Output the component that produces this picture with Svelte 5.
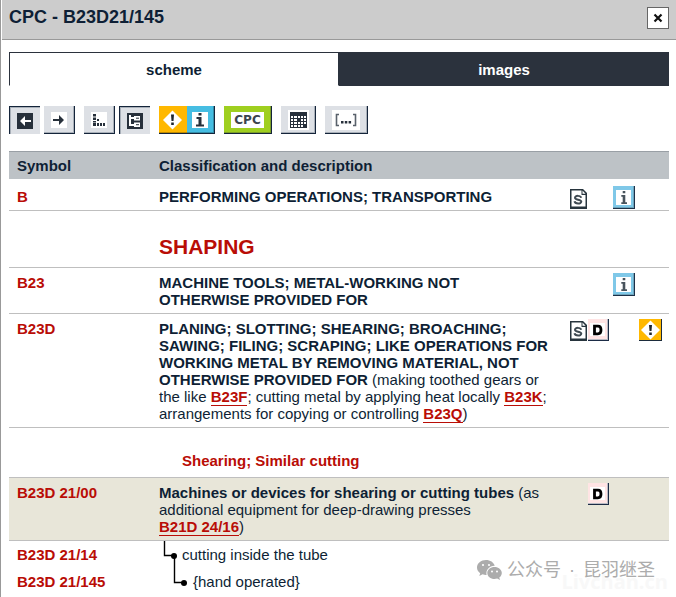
<script>
  const rows = [
    { symbol: 'B', kind: 'first', bold: 'PERFORMING OPERATIONS; TRANSPORTING', icons: ['s', 'i'] },
    { kind: 'section', heading: 'SHAPING' },
    { symbol: 'B23', bold: 'MACHINE TOOLS; METAL-WORKING NOT OTHERWISE PROVIDED FOR', icons: ['i'] },
    {
      symbol: 'B23D',
      bold: 'PLANING; SLOTTING; SHEARING; BROACHING; SAWING; FILING; SCRAPING; LIKE OPERATIONS FOR WORKING METAL BY REMOVING MATERIAL, NOT OTHERWISE PROVIDED FOR',
      parts: [
        { text: ' (making toothed gears or the like ' }, { link: 'B23F' },
        { text: '; cutting metal by applying heat locally ' }, { link: 'B23K' },
        { text: '; arrangements for copying or controlling ' }, { link: 'B23Q' }, { text: ')' }
      ],
      icons: ['s', 'd', 'w']
    },
    { kind: 'subsection', heading: 'Shearing; Similar cutting' },
    {
      symbol: 'B23D 21/00', kind: 'current',
      bold: 'Machines or devices for shearing or cutting tubes',
      parts: [
        { text: ' (as additional equipment for deep-drawing presses ' }, { link: 'B21D 24/16' }, { text: ')' }
      ],
      icons: ['d']
    },
    { symbol: 'B23D 21/14', kind: 'leaf', level: 1, label: 'cutting inside the tube' },
    { symbol: 'B23D 21/145', kind: 'leaf', level: 2, label: '{hand operated}' }
  ];
  const iconNames = { s: 'Scheme', d: 'Definition', i: 'Notes', w: 'Warning' };
</script>

<main>
  <header>
    <h1>CPC - B23D21/145</h1>
    <button class="close" aria-label="Close">
      <svg width="10" height="10" viewBox="0 0 10 10"><path d="M1.5 1.5l7 7M8.5 1.5l-7 7" stroke="#111" stroke-width="2.2" /></svg>
    </button>
  </header>

  <div class="content">
    <div class="tabs" role="tablist">
      <button class="tab active" role="tab" aria-selected="true">scheme</button>
      <button class="tab" role="tab" aria-selected="false">images</button>
    </div>

    <div class="toolbar">
      <div class="group">
        <button class="tool pressed" aria-label="Previous">
          <svg width="16" height="16" viewBox="0 0 16 16"><path d="M0 0h16v16H0z" fill="#27303b" /><path d="M3 8l5-5v4h6v2H8v4z" fill="#fff" /></svg>
        </button>
        <button class="tool" aria-label="Next">
          <svg width="16" height="16" viewBox="0 0 16 16"><path d="M0 0h16v16H0z" fill="#fff" /><path d="M13 8L8 3v4H2v2h6v4z" fill="#27303b" /></svg>
        </button>
      </div>
      <div class="group">
        <button class="tool" aria-label="Flat view">
          <svg width="16" height="16" viewBox="0 0 16 16"><path d="M0 0h16v16H0z" fill="#fff" /><path d="M2 2h3v2.500H2zM2 5.500h3V8H2zM6 7h2v2H6zM2 9h3v1.500H2zM2 11h3v3H2zM6 11h2v3H6zM9 11h2v3H9zM12 11h2v3h-2z" fill="#27303b" /></svg>
        </button>
        <button class="tool pressed" aria-label="Tree view">
          <svg width="16" height="16" viewBox="0 0 16 16"><path d="M0 0h16v16H0z" fill="#27303b" /><path d="M2 2h2v2h3V3h6v4.500H7V6H4v5h3V9.500h6V14H7v-1H2z" fill="#fff" /><path d="M9 5.200h3M9 11.700h3" stroke="#27303b" /></svg>
        </button>
      </div>
      <button class="tool notes" aria-label="Warnings and notes">
        <svg width="55" height="27" viewBox="0 0 55 27">
          <path d="M0 0h28v27H0z" fill="#ffb800" /><path d="M28 0h27v27H28z" fill="#46bde2" />
          <path d="M13.500 4.500l9.500 9.500l-9.500 9.500L4 14z" fill="#fff" /><path d="M12 8.500h3l-.5 6.500h-2zM12.200 16.500h2.600V19h-2.600z" fill="#20262e" />
          <path d="M33 6h16v16H33z" fill="#fff" /><path d="M39.500 7h3v2.500h-3zM37.500 11h5v7.500H45v2h-8v-2h2.500V13h-2z" fill="#27303b" />
          <path d="M0 26.500h55M54.500 0v27" stroke="#000" opacity=".25" />
        </svg>
      </button>
      <button class="tool cpc"><span>CPC</span></button>
      <button class="tool calendar" aria-label="Date table">
        <svg width="21" height="20" viewBox="0 0 21 20"><path d="M0 0h21v20H0z" fill="#fff" /><path d="M2 2h17v16H2z" fill="#27303b" /><path d="M3 6h2v2H3zM6 6h3v2H6zM10 6h2v2h-2zM13 6h2v2h-2zM16 6h2v2h-2zM3 9h2v2H3zM6 9h3v2H6zM13 9h2v2h-2zM16 9h2v2h-2zM3 12h2v2H3zM6 12h3v2H6zM10 12h2v2h-2zM13 12h2v2h-2zM16 12h2v2h-2zM3 15h2v2H3zM6 15h3v2H6zM10 15h2v2h-2zM13 15h2v2h-2z" fill="#fff" /></svg>
      </button>
      <button class="tool brackets" aria-label="Full text">
        <svg width="28" height="20" viewBox="0 0 28 20"><path d="M0 0h28v20H0z" fill="#fff" /><path d="M7 4.500H4.500v11H7M21 4.500h2.500v11H21" fill="none" stroke="#59616b" stroke-width="1.6" /><path d="M9 11h2.500v2.500H9zM12.800 11h2.500v2.500h-2.500zM16.600 11h2.500v2.500h-2.500z" fill="#27303b" /></svg>
      </button>
    </div>

    <table>
      <colgroup><col class="c-symbol" /><col /><col class="c-icons" /></colgroup>
      <thead>
        <tr><th>Symbol</th><th colspan="2">Classification and description</th></tr>
      </thead>
      <tbody>
        {#each rows as row}
          <tr class={row.kind}>
            <td>{#if row.symbol}<a class="symbol" href="#top">{row.symbol}</a>{/if}</td>
            <td>
              {#if row.heading}
                <h2>{row.heading}</h2>
              {:else if row.level}
                <div class="branch">
                  {#if row.level === 1}
                    <svg width="23" height="27" viewBox="0 0 23 27"><path d="M5.500 0v14.500H14M15.500 15v12" fill="none" stroke="#000" stroke-width="1.4" /><circle cx="15" cy="15" r="3" /></svg>
                  {:else}
                    <svg width="34" height="27" viewBox="0 0 34 27"><path d="M15.500 0v14.500H24" fill="none" stroke="#000" stroke-width="1.4" /><circle cx="25" cy="15" r="3" /></svg>
                  {/if}
                  <span>{row.label}</span>
                </div>
              {:else}
                <b>{row.bold}</b>{#each row.parts ?? [] as part}{#if part.link}<a class="ref" href="#top">{part.link}</a>{:else}{part.text}{/if}{/each}
              {/if}
            </td>
            <td>
              {#if row.icons}
                <div class="icons">
                  {#each row.icons as icon}
                    <a class={'icon ' + icon} href="#top" aria-label={iconNames[icon]}>
                      {#if icon === 's'}
                        <svg width="17" height="20" viewBox="0 0 17 20"><path d="M0 0h13l4 4v16H0z" fill="#27343d" /><path d="M1.500 1.500h10V6h4v11.500h-14z" fill="#fff" /><path d="M12.500 1.500v3.300h3z" fill="#fff" /><path d="M11.200 8.800C10.500 6.300 5 6.200 5 8.700c0 2.600 6.300 1.300 6.300 3.900 0 2.700-6.200 2.500-6.800-.3" fill="none" stroke="#3f4a52" stroke-width="2" /></svg>
                      {:else if icon === 'd'}
                        <svg width="21" height="22" viewBox="0 0 21 22"><path d="M0 0h21v22H0z" fill="#1c2c46" /><path d="M0 0h20v21H0z" fill="#b9bbc4" /><path d="M0 0h19v20H0z" fill="#ffe4e4" /><path d="M2 4h15v13H2z" fill="#fff" /><path d="M6.500 7.200H10q3 0 3 3.800t-3 3.800H6.500z" fill="none" stroke="#000" stroke-width="2.8" /></svg>
                      {:else if icon === 'i'}
                        <svg width="22" height="23" viewBox="0 0 22 23"><path d="M0 0h22v23H0z" fill="#1c3048" /><path d="M0 0h21v22H0z" fill="#6ea4bb" /><path d="M0 0h20v21H0z" fill="#7fc8e8" /><path d="M3 4h15v15H3z" fill="#fff" /><path d="M9.700 5h2.600v2.300H9.700zM8.300 9h4v7.300H14V18H8.300v-1.700h1.400v-5.600H8.300z" fill="#48535c" /></svg>
                      {:else}
                        <svg width="23" height="22" viewBox="0 0 23 22"><path d="M0 0h23v22H0z" fill="#1c2c3c" /><path d="M0 0h22v21H0z" fill="#ffb800" /><path d="M11.500 1.500l9.500 9.500l-9.500 9.500L2 11z" fill="#fff" /><path d="M10 6h3l-.5 6h-2zM10.200 13.500h2.600v2.500h-2.600z" fill="#20262e" /></svg>
                      {/if}
                    </a>
                  {/each}
                </div>
              {/if}
            </td>
          </tr>
        {/each}
      </tbody>
    </table>
  </div>

  <div class="site">Livchan.cn</div>
  <div class="watermark">
    <svg width="25" height="20" viewBox="0 0 25 20">
      <path d="M9 0C4 0 0 3.300 0 7.500c0 2.300 1.200 4.300 3.200 5.700L2.300 16l3.300-1.700c1.100.4 2.200.6 3.400.6h.6C8.500 10.300 12 6 17.700 5.800 16.800 2.300 13.200 0 9 0z" fill="#acacac" />
      <path d="M17.500 7c-4 0-7.200 2.700-7.200 6s3.200 6.100 7.200 6.100c.9 0 1.900-.2 2.700-.5L23 20l-.7-2.400c1.500-1.100 2.500-2.700 2.500-4.600 0-3.300-3.300-6-7.300-6z" fill="#acacac" />
      <g fill="#fff"><circle cx="6" cy="5" r="1.100" /><circle cx="12" cy="5" r="1.100" /><circle cx="15" cy="11.500" r="1" /><circle cx="20" cy="11.500" r="1" /></g>
    </svg>
    <div class="account"><span>公众号</span><span>·</span><span>昆羽继圣</span></div>
  </div>
</main>

<style>
  :global(body) { margin: 0; background: #fff; }
  main {
    position: relative;
    box-sizing: border-box;
    min-height: 100vh;
    padding-left: 1px;
    border-left: 1px solid #999;
    background: #fff;
    color: #0e1f35;
    font: 15px/17px "Liberation Sans", Arial, sans-serif;
  }
  button { font: inherit; color: inherit; cursor: pointer; border-radius: 0; }
  svg { display: block; flex: none; }
  header {
    display: flex;
    justify-content: space-between;
    align-items: flex-start;
    box-sizing: border-box;
    height: 40px;
    padding: 7px 7px 0;
    background: #ccc;
    border-bottom: 1px solid #999;
  }
  h1 { margin: 0; font-size: 18px; line-height: 20px; }
  .close {
    display: grid;
    place-items: center;
    width: 22px;
    height: 22px;
    padding: 0;
    background: #fff;
    border: 1px solid #666;
  }
  .content { padding: 12px 7px 0; }
  .tabs { display: flex; }
  .tab {
    flex: 1;
    height: 34px;
    padding: 0;
    border: 1px solid #2b323d;
    background: #2b323d;
    color: #fff;
    font-weight: bold;
  }
  .tab.active { background: #fff; color: #0e1f35; border-bottom-color: #fff; }
  .toolbar { display: flex; gap: 9px; margin: 20px 0 17px; }
  .group { display: flex; gap: 4px; }
  .tool {
    display: flex;
    align-items: center;
    justify-content: center;
    box-sizing: border-box;
    width: 31px;
    height: 28px;
    padding: 0;
    border: 0 solid #14243a;
    border-width: 0 1px 1px 0;
    background: #dde0e5;
    box-shadow: inset -1px -1px #a9b0b9;
  }
  .pressed { border-width: 1px 0 0 1px; box-shadow: inset 1px 1px #a9b0b9; }
  .notes { width: 56px; }
  .cpc { width: 48px; background: #9fcf20; box-shadow: inset -1px -1px #7c9e29; }
  .cpc span {
    padding: 0 3px;
    background: #fff;
    color: #3b444e;
    font: bold 12px/16px "DejaVu Sans", sans-serif;
  }
  .calendar { width: 35px; }
  .brackets { width: 43px; }
  table { width: 100%; table-layout: fixed; border-collapse: separate; border-spacing: 0; }
  .c-symbol { width: 142px; }
  .c-icons { width: 107px; }
  th {
    height: 27px;
    padding: 0 8px;
    box-sizing: content-box;
    border-top: 1px solid #999fa5;
    background: #bdc2c6;
    text-align: left;
  }
  td { padding: 6px 12px 5px 8px; vertical-align: top; border-bottom: 1px solid #bfbfbf; }
  td:last-child { padding: 5px 0 0 8px; }
  .first td { padding-top: 9px; padding-bottom: 5px; }
  .first td:last-child { padding: 7px 0 0 8px; }
  .symbol, .ref { color: #b90d06; font-weight: bold; text-decoration: none; white-space: nowrap; }
  .ref { border-bottom: 1px solid #b90d06; }
  h2 { margin: 0; color: #b90d06; font-size: 21px; line-height: 24px; }
  .section td { padding: 24px 8px 8px; }
  .subsection td { padding: 24px 8px 8px 31px; border-bottom: 0; }
  .subsection h2 { font-size: 15px; line-height: 17px; }
  .current td { background: #e8e6d9; border-top: 1px solid #bfbfbf; }
  .leaf td { padding: 0 8px; line-height: 27px; border: 0; }
  .leaf td:last-child { padding: 0; }
  .branch { display: flex; height: 27px; }
  .icons { display: grid; grid-template-columns: 18px 25px 26px 23px; align-items: end; }
  .icon { display: block; }
  .s { grid-column: 1; }
  .d { grid-column: 2; }
  .i { grid-column: 3; }
  .w { grid-column: 4; }
  .site {
    position: absolute;
    right: 8px;
    bottom: 4px;
    color: #f8f8f8;
    font: bold 20px/22px "Open Sans", sans-serif;
  }
  .watermark {
    position: absolute;
    right: 21px;
    bottom: 15px;
    display: flex;
    align-items: center;
    gap: 5px;
    color: #acacac;
    font: 18px/24px "Liberation Sans", "Noto Sans CJK SC", sans-serif;
  }
  .account { display: flex; gap: 8px; }
</style>
